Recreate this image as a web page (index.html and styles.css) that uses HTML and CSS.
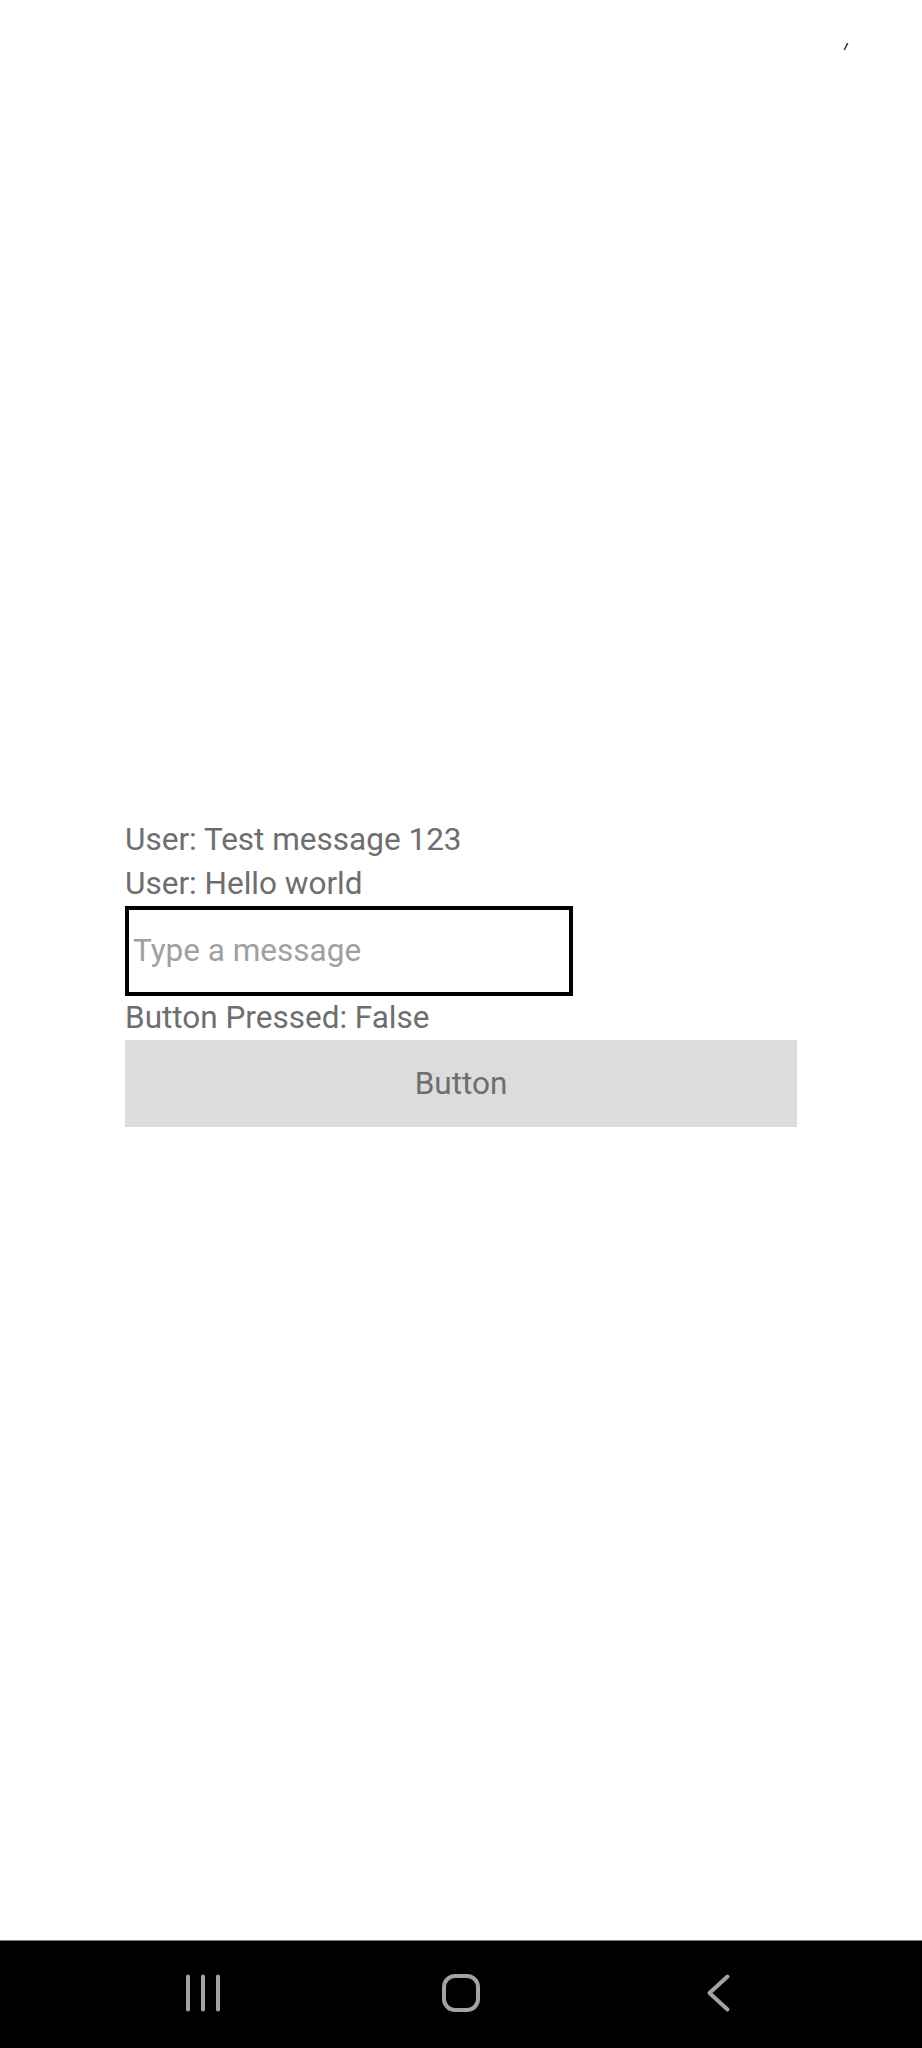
FILE: index.html
```html
<!DOCTYPE html>
<html lang="en">
<head>
    <meta charset="UTF-8">
    <meta name="viewport" content="width=device-width, initial-scale=1.0">
    <title>Chat</title>
    <link rel="stylesheet" href="styles.css">
</head>
<body>

<div class="screen">
    <!-- stray status mark in the corner -->
    <svg class="status-mark" width="6" height="8" viewBox="0 0 6 8">
        <line x1="4.5" y1="0.5" x2="1.5" y2="6.5" stroke="#333" stroke-width="1.6" stroke-linecap="round"/>
    </svg>

    <div class="app">
        <div class="chat">
            <div class="message">User: Test message 123</div>
            <div class="message">User: Hello world</div>
            <input class="message-input" type="text" placeholder="Type a message">
            <div class="message">Button Pressed: False</div>
            <button class="button">Button</button>
        </div>
    </div>

    <div class="nav-bar">
        <div class="nav-slot">
            <svg width="40" height="40" viewBox="0 0 40 40">
                <g stroke="#a3a3a3" stroke-width="4" stroke-linecap="round">
                    <line x1="5" y1="3.5" x2="5" y2="36.5"/>
                    <line x1="20" y1="3.5" x2="20" y2="36.5"/>
                    <line x1="35" y1="3.5" x2="35" y2="36.5"/>
                </g>
            </svg>
        </div>
        <div class="nav-slot">
            <svg width="40" height="40" viewBox="0 0 40 40">
                <rect x="3" y="3" width="34" height="34" rx="11" fill="none" stroke="#a3a3a3" stroke-width="4"/>
            </svg>
        </div>
        <div class="nav-slot">
            <svg width="40" height="40" viewBox="0 0 40 40">
                <polyline points="28.5,3.5 10.5,20 28.5,36.5" fill="none" stroke="#a3a3a3" stroke-width="4" stroke-linecap="round" stroke-linejoin="round"/>
            </svg>
        </div>
    </div>
</div>

</body>
</html>
```

FILE: styles.css
```css
body {
    margin: 0;
    padding: 0;
    background-color: #ffffff;
    font-family: Roboto, "Liberation Sans", sans-serif;
}
.screen {
    position: relative;
    height: 2048px;
    display: flex;
    flex-direction: column;
}
.status-mark {
    position: absolute;
    left: 843px;
    top: 43px;
}
.app {
    flex: 1;
    display: flex;
    justify-content: center;
    align-items: center;
    padding-top: 4px;
}
.chat {
    width: 672px;
    display: flex;
    flex-direction: column;
    align-items: flex-start;
}
.message {
    font-size: 31.5px;
    line-height: 44px;
    color: #6e6e6e;
}
.message-input {
    box-sizing: border-box;
    width: 448px;
    height: 90px;
    border: 4px solid #000000;
    border-radius: 0;
    padding: 0 4px;
    margin: 0;
    font-family: Roboto, "Liberation Sans", sans-serif;
    font-size: 31.5px;
    color: #6e6e6e;
    background-color: #ffffff;
    outline: none;
}
.message-input::placeholder {
    color: #a0a0a0;
}
.button {
    width: 100%;
    height: 87px;
    margin: 0;
    border: none;
    border-radius: 0;
    background-color: #dcdcdc;
    color: #6e6e6e;
    font-family: Roboto, "Liberation Sans", sans-serif;
    font-size: 31.5px;
    cursor: pointer;
}
.nav-bar {
    height: 108px;
    box-sizing: border-box;
    border-top: 1px solid #7a7a7a;
    background-color: #000000;
    display: flex;
    justify-content: center;
    align-items: center;
    padding-bottom: 4px;
}
.nav-slot {
    width: 258px;
    display: flex;
    justify-content: center;
}
```
